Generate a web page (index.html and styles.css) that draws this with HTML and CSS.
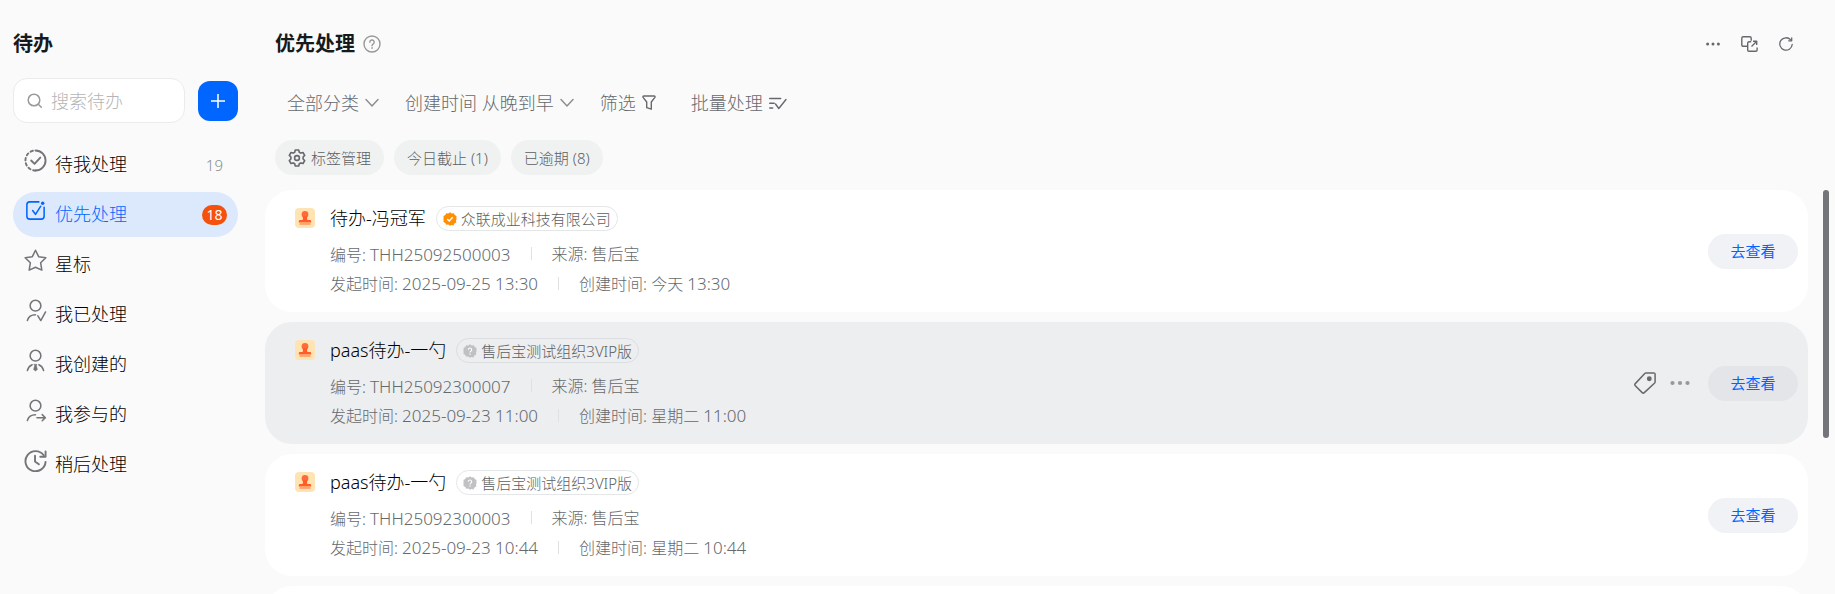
FILE: index.html
```html
<!DOCTYPE html>
<html lang="zh-CN">
<head>
    <meta charset="UTF-8">
    <meta name="viewport" content="width=device-width, initial-scale=1.0">
    <title>待办</title>
    <link rel="stylesheet" href="styles.css">
</head>
<body>
    <svg class="defs" aria-hidden="true">
        <defs>
            <symbol id="stamp" viewBox="0 0 20 20">
                <rect width="20" height="20" rx="4" fill="#ffe4b3"/>
                <circle cx="10" cy="6.4" r="3.4" fill="#ff6a3c"/>
                <path d="M8.2 8h3.6l.5 4h2.7a1.2 1.2 0 0 1 1.2 1.2v1.3H3.8v-1.3A1.2 1.2 0 0 1 5 12h2.7z" fill="#ff5c26"/>
                <path d="M4.5 15.2h11v1.5h-11z" fill="#ff9060"/>
            </symbol>
            <symbol id="badge" viewBox="0 0 14 14">
                <path d="M7 .3l1.7 1.2 2.1-.3.9 1.9 1.9.9-.3 2.1L13.700 7l-.7 1.500.300 2.100-1.900.900-.900 1.900-2.100-.300L7 13.700l-1.700-1.200-2.100.300-.900-1.900-1.900-.900.300-2.100L.3 7l.4-1.500-.300-1.500 1.900-.900.900-1.900 2.100.300z" fill="currentColor"/>
            </symbol>
        </defs>
    </svg>

    <div class="app">
        <aside class="sidebar">
            <h1>待办</h1>
            <div class="search-row">
                <label class="search">
                    <svg width="16" height="16" viewBox="0 0 16 16" fill="none" stroke="#999" stroke-width="1.5" stroke-linecap="round"><circle cx="7" cy="7" r="5.800"/><path d="M11.300 11.300l3 3"/></svg>
                    <input type="text" placeholder="搜索待办" aria-label="搜索待办">
                </label>
                <button class="add-button" aria-label="新建">
                    <svg width="14" height="14" viewBox="0 0 14 14" stroke="#fff" stroke-width="1.500"><path d="M7 0v14M0 7h14"/></svg>
                </button>
            </div>

            <nav class="menu">
                <a href="#" class="menu-item">
                    <svg class="menu-icon bold" viewBox="0 0 24 24"><path d="M12 1.500a10.500 10.500 0 0 1 0 21"/><path d="M12 22.500a10.500 10.500 0 0 1 0-21" stroke-dasharray="2.500 3"/><path d="M7.500 12l3.500 3.500 6-6.500"/></svg>
                    <span class="menu-text">待我处理</span>
                    <span class="count">19</span>
                </a>
                <a href="#" class="menu-item active">
                    <svg class="menu-icon" viewBox="0 0 24 24"><path d="M15.500 3H6a3 3 0 0 0-3 3v12a3 3 0 0 0 3 3h12a3 3 0 0 0 3-3V8.500"/><path d="M9 12l3 4 5.500-8.500"/><circle cx="19.500" cy="4.500" r="1.800" fill="currentColor" stroke="none"/></svg>
                    <span class="menu-text">优先处理</span>
                    <span class="count">18</span>
                </a>
                <a href="#" class="menu-item">
                    <svg class="menu-icon" viewBox="0 0 24 24"><path d="M12 1.300l3.300 6.700 7.500 1.100-5.400 5.300 1.200 7.600L12 19l-6.600 3 1.200-7.600-5.400-5.300L8.700 8z"/></svg>
                    <span class="menu-text">星标</span>
                </a>
                <a href="#" class="menu-item">
                    <svg class="menu-icon" viewBox="0 0 24 24"><circle cx="12" cy="7" r="5.600"/><path d="M3.500 22.500c1-3.500 4-6 8.500-6M14.500 17.500l3 5 5-9"/></svg>
                    <span class="menu-text">我已处理</span>
                </a>
                <a href="#" class="menu-item">
                    <svg class="menu-icon" viewBox="0 0 24 24"><circle cx="12" cy="7" r="5.600"/><path d="M3.500 22.500c.800-3 2.500-5 5-6M20.500 22.500c-.800-3-2.500-5-5-6"/><path d="M10.500 16h3l-.500 1.500 1 4L12 23l-2-1.500 1-4z" fill="currentColor" stroke-width=".5"/></svg>
                    <span class="menu-text">我创建的</span>
                </a>
                <a href="#" class="menu-item">
                    <svg class="menu-icon" viewBox="0 0 24 24"><circle cx="12" cy="7" r="5.600"/><path d="M3.500 22.500c1-3.500 4-6 8.500-6M13.500 19.500H22M19 16.300l3.300 3.200-3.300 3.200"/></svg>
                    <span class="menu-text">我参与的</span>
                </a>
                <a href="#" class="menu-item">
                    <svg class="menu-icon bold" viewBox="0 0 24 24"><path d="M20.500 6.500A10.500 10.500 0 1 0 22.500 13.500"/><path d="M22.500 2.500V8H17M11.500 7v6l4 3"/></svg>
                    <span class="menu-text">稍后处理</span>
                </a>
            </nav>
        </aside>

        <main class="content">
            <header class="header">
                <h2>优先处理</h2>
                <button class="icon-button" aria-label="帮助">
                    <svg width="18" height="18" viewBox="0 0 18 18" fill="none" stroke="#999" stroke-width="1.400" stroke-linecap="round"><circle cx="9" cy="9" r="8"/><path d="M6.800 7.200a2.200 2.200 0 1 1 3.300 1.900c-.700.400-1.100.800-1.100 1.700"/><circle cx="9" cy="13" r=".5" fill="#999" stroke-width=".6"/></svg>
                </button>
                <div class="header-tools">
                    <button class="icon-button" aria-label="更多">
                        <svg width="14" height="14" viewBox="0 0 14 14" fill="currentColor"><circle cx="1.600" cy="7" r="1.500"/><circle cx="7" cy="7" r="1.500"/><circle cx="12.400" cy="7" r="1.500"/></svg>
                    </button>
                    <button class="icon-button" aria-label="新窗口打开">
                        <svg width="17" height="16" viewBox="0 0 17 16" fill="none" stroke="currentColor" stroke-width="1.400" stroke-linejoin="round"><path d="M6.500 10.300H2.200A1.400 1.400 0 0 1 .8 8.900V2.200A1.400 1.400 0 0 1 2.200.8h6.600a1.400 1.400 0 0 1 1.400 1.400v2.600"/><path d="M10.200 5.800H7.900a1.200 1.200 0 0 0-1.200 1.200v7a1.200 1.200 0 0 0 1.200 1.200h7a1.200 1.200 0 0 0 1.200-1.200v-2.500M10.500 10.500l5-5M12 5.300h3.700V9"/></svg>
                    </button>
                    <button class="icon-button" aria-label="刷新">
                        <svg width="14" height="14" viewBox="0 0 14 14" fill="none" stroke="currentColor" stroke-width="1.300" stroke-linecap="round" stroke-linejoin="round"><path d="M13.200 7.500a6.200 6.200 0 1 1-1.500-4.600"/><path d="M12.700.8v3h-3"/></svg>
                    </button>
                </div>
            </header>

            <div class="filters">
                <button class="filter">全部分类
                    <svg width="14" height="10" viewBox="0 0 14 10"><path d="M1 1.500l6 6.500 6-6.500"/></svg>
                </button>
                <button class="filter">创建时间 从晚到早
                    <svg width="14" height="10" viewBox="0 0 14 10"><path d="M1 1.500l6 6.500 6-6.500"/></svg>
                </button>
                <button class="filter wide">筛选
                    <svg class="dark" width="14" height="16" viewBox="0 0 14 16"><path d="M1.800 1h10.400c.800 0 1.100.800.700 1.400L9.300 7v7.200l-4.600-1.500V7L1.100 2.400C.7 1.800 1 1 1.800 1z"/></svg>
                </button>
                <button class="filter">批量处理
                    <svg class="dark" width="18" height="14" viewBox="0 0 18 14"><path d="M.7 2.500h11M.7 7.200h4.500M.7 12h3M6.500 8l3.300 4.500L17 3.500"/></svg>
                </button>
            </div>

            <div class="chips">
                <button class="chip">
                    <svg width="18" height="18" viewBox="-1 0 18 18" fill="none" stroke="#66696c" stroke-width="1.600" stroke-linejoin="round"><path d="M6.300 1h3.400l.6 2.200 1.500.9 2.200-.6 1.700 2.900L14.100 8v2l1.600 1.600-1.700 2.900-2.200-.6-1.500.9-.6 2.200H6.300l-.6-2.200-1.500-.9-2.200.6-1.700-2.900L1.900 10V8L.3 6.400 2 3.500l2.200.6 1.500-.9z"/><circle cx="8" cy="9" r="2.400"/></svg>
                    标签管理
                </button>
                <button class="chip">今日截止 (1)</button>
                <button class="chip">已逾期 (8)</button>
            </div>

            <div class="list-wrap">
                <div class="list">
                    <article class="card">
                        <svg class="card-icon"><use href="#stamp"/></svg>
                        <div class="card-body">
                            <div class="card-title">
                                <h3>待办-冯冠军</h3>
                                <span class="org verified">
                                    <svg width="14" height="14" viewBox="0 0 14 14"><use href="#badge"/><path d="M4.200 7l2 2 3.500-3.700" fill="none" stroke="#fff" stroke-width="1.500"/></svg>
                                    众联成业科技有限公司
                                </span>
                            </div>
                            <p class="info"><span>编号: <span class="num">THH25092500003</span></span><span>来源: 售后宝</span></p>
                            <p class="info"><span>发起时间: <span class="num">2025-09-25 13:30</span></span><span>创建时间: 今天 <span class="num">13:30</span></span></p>
                        </div>
                        <button class="view-button">去查看</button>
                    </article>

                    <article class="card hover">
                        <svg class="card-icon"><use href="#stamp"/></svg>
                        <div class="card-body">
                            <div class="card-title">
                                <h3>paas待办-一勺</h3>
                                <span class="org">
                                    <svg width="14" height="14" viewBox="0 0 14 14"><use href="#badge"/><path d="M5.300 5.700a1.700 1.700 0 1 1 2.500 1.500c-.6.300-.8.600-.8 1.200M7 9.600v1.100" fill="none" stroke="#fff" stroke-width="1.100"/></svg>
                                    售后宝测试组织3VIP版
                                </span>
                            </div>
                            <p class="info"><span>编号: <span class="num">THH25092300007</span></span><span>来源: 售后宝</span></p>
                            <p class="info"><span>发起时间: <span class="num">2025-09-23 11:00</span></span><span>创建时间: 星期二 <span class="num">11:00</span></span></p>
                        </div>
                        <div class="card-tools">
                            <button class="icon-button" aria-label="标签">
                                <svg width="22" height="22" viewBox="0 0 22 22" fill="none" stroke="currentColor" stroke-width="1.500" stroke-linejoin="round"><path d="M12 .9h7.600a1.500 1.500 0 0 1 1.500 1.500V10a1.500 1.500 0 0 1-.4 1L10.300 20.600a1.500 1.500 0 0 1-2.100 0L1.300 13.700a1.500 1.500 0 0 1 0-2.100L11 1.300a1.500 1.500 0 0 1 1-.4z"/><circle cx="15.300" cy="6.700" r="1.700" fill="currentColor"/></svg>
                            </button>
                            <button class="icon-button light" aria-label="更多">
                                <svg width="20" height="14" viewBox="0 0 20 14" fill="currentColor"><circle cx="2.500" cy="7" r="2.100"/><circle cx="10" cy="7" r="2.100"/><circle cx="17.500" cy="7" r="2.100"/></svg>
                            </button>
                        </div>
                        <button class="view-button">去查看</button>
                    </article>

                    <article class="card">
                        <svg class="card-icon"><use href="#stamp"/></svg>
                        <div class="card-body">
                            <div class="card-title">
                                <h3>paas待办-一勺</h3>
                                <span class="org">
                                    <svg width="14" height="14" viewBox="0 0 14 14"><use href="#badge"/><path d="M5.300 5.700a1.700 1.700 0 1 1 2.500 1.500c-.6.300-.8.600-.8 1.200M7 9.600v1.100" fill="none" stroke="#fff" stroke-width="1.100"/></svg>
                                    售后宝测试组织3VIP版
                                </span>
                            </div>
                            <p class="info"><span>编号: <span class="num">THH25092300003</span></span><span>来源: 售后宝</span></p>
                            <p class="info"><span>发起时间: <span class="num">2025-09-23 10:44</span></span><span>创建时间: 星期二 <span class="num">10:44</span></span></p>
                        </div>
                        <button class="view-button">去查看</button>
                    </article>

                    <article class="card empty"></article>
                </div>
                <div class="scrollbar"><div class="scrollbar-thumb"></div></div>
            </div>
        </main>
    </div>
</body>
</html>
```
FILE: styles.css
```css
* { margin: 0; padding: 0; box-sizing: border-box; }
body {
    font-family: 'Noto Sans', 'Noto Sans CJK SC', sans-serif;
    font-weight: 300;
    font-size: 16px;
    background-color: #fafafa;
    color: #000;
    overflow: hidden;
}
button, input {
    font: inherit;
    color: inherit;
    background: none;
    border: none;
}
button {
    cursor: pointer;
    white-space: nowrap;
}
a {
    color: inherit;
    text-decoration: none;
}
svg {
    display: block;
    flex: none;
}
.defs {
    position: absolute;
    width: 0;
    height: 0;
}
.app {
    display: flex;
    height: 100vh;
    padding-top: 30px;
}

/* 左侧栏 */
.sidebar {
    width: 265px;
    flex: none;
    padding: 0 27px 0 13px;
}
h1, h2 {
    font-size: 20px;
    font-weight: 700;
    line-height: 28px;
    color: #171a1d;
}
.search-row {
    display: flex;
    align-items: center;
    gap: 13px;
    margin-top: 20px;
}
.search {
    flex: 1;
    min-width: 0;
    display: flex;
    align-items: center;
    gap: 8px;
    height: 45px;
    padding: 0 13px;
    background: #fff;
    border: 1px solid #ebebeb;
    border-radius: 14px;
}
.search input {
    flex: 1;
    min-width: 0;
    font-size: 18px;
    outline: none;
}
.search input::placeholder {
    color: #b5b5b5;
}
.add-button {
    width: 40px;
    height: 40px;
    display: flex;
    align-items: center;
    justify-content: center;
    background: #06f;
    border-radius: 12px;
}
.menu {
    display: flex;
    flex-direction: column;
    gap: 5px;
    margin-top: 19px;
}
.menu-item {
    display: flex;
    align-items: center;
    gap: 8px;
    height: 45px;
    padding: 0 11px;
    border-radius: 23px;
}
.menu-icon {
    width: 23px;
    height: 23px;
    margin-bottom: 8px;
    color: #737578;
    fill: none;
    stroke: currentColor;
    stroke-width: 1.6;
    stroke-linecap: round;
    stroke-linejoin: round;
}
.menu-icon.bold {
    stroke-width: 2;
}
.menu-text {
    flex: 1;
    padding-bottom: 2px;
    font-size: 18px;
    line-height: 24px;
}
.count {
    min-width: 25px;
    padding: 0 4px;
    font-size: 15px;
    line-height: 20px;
    text-align: center;
    color: #8c8c8c;
}
.menu-item.active {
    background: #dce8fc;
    color: #06f;
}
.active .menu-icon {
    color: #06f;
}
.active .count {
    background: #f5500c;
    border-radius: 10px;
    font-size: 14px;
    font-weight: 400;
    color: #fff;
}

/* 右侧内容 */
.content {
    flex: 1;
    min-width: 0;
    display: flex;
    flex-direction: column;
}
.header {
    display: flex;
    align-items: center;
    gap: 8px;
    padding: 0 42px 0 10px;
}
.header-tools {
    display: flex;
    align-items: center;
    gap: 21px;
    margin-left: auto;
}
.icon-button {
    color: #66696c;
}
.icon-button.light {
    color: #999;
}
.filters {
    display: flex;
    gap: 26px;
    margin-top: 33px;
    padding-left: 22px;
}
.filter {
    display: flex;
    align-items: center;
    gap: 6px;
    font-size: 18px;
    line-height: 24px;
    color: #66696c;
}
.filter.wide {
    margin-right: 9px;
}
.filter svg {
    fill: none;
    stroke: #8c8c8c;
    stroke-width: 1.4;
    stroke-linecap: round;
    stroke-linejoin: round;
}
.filter .dark {
    stroke: #66696c;
}
.chips {
    display: flex;
    gap: 10px;
    margin-top: 25px;
    padding-left: 10px;
}
.chip {
    display: flex;
    align-items: center;
    gap: 5px;
    height: 35px;
    padding: 0 13px;
    background: #f0f2f2;
    border-radius: 18px;
    font-size: 15px;
    color: #5c5f62;
}
.list-wrap {
    flex: 1;
    min-height: 0;
    display: flex;
    margin-top: 15px;
}
.list {
    flex: 1;
    display: flex;
    flex-direction: column;
    gap: 10px;
    overflow: hidden;
}
.card {
    flex: none;
    display: flex;
    align-items: center;
    padding: 0 10px 0 30px;
    background: #fff;
    border-radius: 27px;
}
.card.hover {
    background: #edeef0;
}
.card.empty {
    height: 122px;
}
.card-icon {
    width: 20px;
    height: 20px;
    margin: 18px 15px 0 0;
    align-self: flex-start;
}
.card-body {
    flex: 1;
    padding: 16px 0 14px;
}
.card-title {
    display: flex;
    align-items: center;
    gap: 10px;
    margin-bottom: 9px;
}
h3 {
    font-size: 18px;
    font-weight: 300;
    line-height: 25px;
}
.org {
    display: flex;
    align-items: center;
    gap: 4px;
    height: 25px;
    padding: 0 6px;
    border: 1px solid #e5e6e8;
    border-radius: 13px;
    font-size: 15px;
    color: #5c5f62;
}
.hover .org {
    border-color: #dcdde0;
}
.org svg {
    color: #c0c1c2;
}
.org.verified svg {
    color: #ff8f00;
}
.info {
    display: flex;
    align-items: center;
    height: 29px;
    line-height: 29px;
    color: #66696c;
}
.info .num {
    font-size: 17px;
}
.info > span + span::before {
    content: "";
    display: inline-block;
    width: 1px;
    height: 13px;
    margin: 0 20px;
    background: #e0e1e3;
}
.card-tools {
    display: flex;
    align-items: center;
    gap: 14px;
    margin-right: 18px;
}
.view-button {
    width: 90px;
    height: 35px;
    padding-bottom: 1px;
    border-radius: 18px;
    background: #f0f2f5;
    font-size: 15px;
    font-weight: 400;
    color: #06f;
}
.hover .view-button {
    background: #e3e5e9;
}
.scrollbar {
    width: 27px;
    padding-left: 15px;
}
.scrollbar-thumb {
    width: 6px;
    height: 248px;
    border-radius: 3px;
    background: #737578;
}
```
